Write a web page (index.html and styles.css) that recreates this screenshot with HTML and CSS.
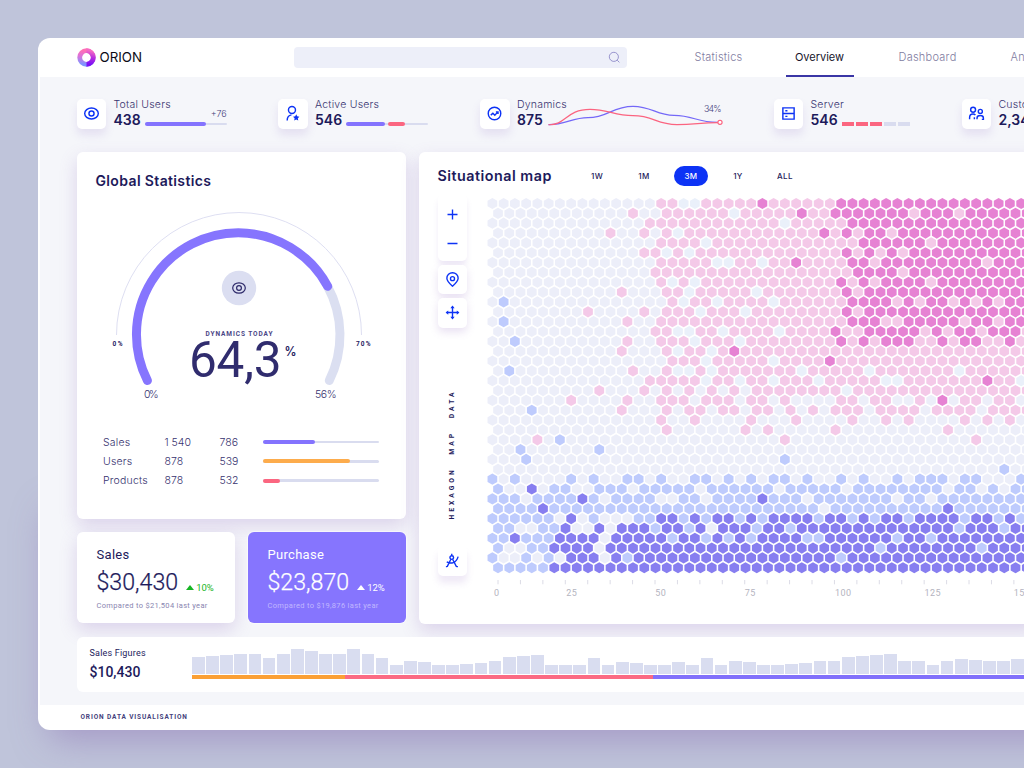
FILE: index.html
```html
<!DOCTYPE html>
<html lang="en">
<head>
<meta charset="utf-8">
<title>Orion</title>
<link rel="stylesheet" href="styles.css">
</head>
<body>
<div class="shell">
  <header class="top">
    <div class="brand">
      <svg class="logo" viewBox="0 0 19 19">
        <defs>
          <linearGradient id="lg1" x1="0.4" y1="0" x2="0.3" y2="1"><stop offset="0" stop-color="#ff6fb5"/><stop offset="0.45" stop-color="#d873dc"/><stop offset="1" stop-color="#7f95ff"/></linearGradient>
          <linearGradient id="lg2" x1="0.5" y1="0" x2="0.4" y2="1"><stop offset="0" stop-color="#f56ac4"/><stop offset="0.5" stop-color="#b52be0"/><stop offset="1" stop-color="#7a10f5"/></linearGradient>
        </defs>
        <circle cx="9.5" cy="9.5" r="6.8" fill="none" stroke="url(#lg1)" stroke-width="4.8"/>
        <path d="M9.5 2.7A6.8 6.8 0 0 1 9.500 16.300" fill="none" stroke="url(#lg2)" stroke-width="4.8"/>
      </svg>
      <span class="brand-name">ORION</span>
    </div>
    <div class="search"><svg viewBox="0 0 12 12"><circle cx="5.400" cy="5.400" r="4.200"/><path d="M8.500 8.500L10.500 10.500"/></svg></div>
    <nav class="nav">
      <a class="nav-item n1">Statistics</a>
      <a class="nav-item n2 active">Overview</a>
      <a class="nav-item n3">Dashboard</a>
      <a class="nav-item n4">Analytics</a>
    </nav>
  </header>

  <main class="main">
    <section class="stats">
      <div class="stat">
        <div class="tile"><svg viewBox="0 0 16 16"><ellipse cx="8" cy="8" rx="6.400" ry="5.100"/><circle cx="8" cy="8" r="2.400"/></svg></div>
        <div class="stat-text"><div class="label">Total Users</div>
          <div class="value-row"><b>438</b><div class="meter m82"><em>+76</em><i class="seg violet w61"></i></div></div></div>
      </div>
      <div class="stat">
        <div class="tile"><svg viewBox="0 0 16 16"><circle cx="7.500" cy="4.700" r="3.300"/><path d="M3 14.500c0-3 1.500-4.800 4-5.200"/><path class="solid" d="M11.500 8.800l.9 1.900 2.100.3-1.500 1.500.4 2.100-1.900-1-1.900 1 .4-2.100-1.500-1.500 2.100-.3z"/></svg></div>
        <div class="stat-text"><div class="label">Active Users</div>
          <div class="value-row"><b>546</b><div class="meter m82"><i class="seg violet w39"></i><i class="seg red w17"></i></div></div></div>
      </div>
      <div class="stat">
        <div class="tile"><svg viewBox="0 0 16 16"><circle cx="8" cy="8" r="5.900"/><path d="M4.500 9.500L6.500 7.800 8.300 9.600 11 6.700M9.300 6.500h2v2"/></svg></div>
        <div class="stat-text"><div class="label">Dynamics</div>
          <div class="value-row"><b>875</b></div></div>
        <svg class="spark" viewBox="547 98 178 32">
          <path class="sv" d="M548.500 124.700C565 125 572 117.700 588 117.700C608 117.700 612 106.300 633 106.300C652 106.300 656 115.300 674 115.400C694 115.500 696 122.400 718 122.400"/>
          <path class="sr" d="M548.500 124.700C566 125.500 566 109.300 590 109.300C608 109.300 614 115.700 633 115.700C654 115.700 656 124.600 677 124.600C695 124.600 700 122.600 718 122.600"/>
          <circle cx="720" cy="122.300" r="2.100"/>
          <text x="704" y="111.500" textLength="17.500">34%</text>
        </svg>
      </div>
      <div class="stat">
        <div class="tile"><svg viewBox="0 0 16 16"><path d="M2.700 2.700h10.600v10.600H2.700zM2.700 8h10.600M5 5.400h2M5 10.700h2"/></svg></div>
        <div class="stat-text"><div class="label">Server</div>
          <div class="value-row"><b>546</b><div class="blocks"><i></i><i></i><i></i><i class="off"></i><i class="off"></i></div></div></div>
      </div>
      <div class="stat">
        <div class="tile"><svg viewBox="0 0 16 16"><circle cx="4.800" cy="4.500" r="2.300"/><circle cx="11.600" cy="6" r="1.900"/><path d="M1.500 13.500V12c0-2.200 1.300-3.500 3.200-3.500 1 0 1.800.5 2.300 1M8.500 13.500v-1.200c0-1.400 1.200-2.400 3-2.400s3 1 3 2.400v1.200h-1.500M6 13.500v-2"/></svg></div>
        <div class="stat-text"><div class="label">Customers</div>
          <div class="value-row"><b>2,348</b></div></div>
      </div>
    </section>

    <section class="grid">
      <div class="left">
        <article class="card global">
          <h2 class="h-global">Global Statistics</h2>
          <svg class="gauge" viewBox="77 200 329 220">
            <path class="thin" d="M116.500 335A122.300 122.300 0 0 1 361.500 335"/>
            <path class="arc track" d="M327.700 286.700A101.800 101.800 0 0 1 329.300 380.500"/>
            <path class="arc fill" d="M147.400 380.500A101.800 101.800 0 0 1 238.300 232.800A101.800 101.800 0 0 1 327.700 286.300"/>
            <circle class="eye-bg" cx="239" cy="288" r="17.200"/>
            <ellipse class="eye" cx="239" cy="288" rx="6.300" ry="5.200"/><circle class="eye" cx="239" cy="288" r="2.400"/>
            <text class="tiny" x="112.500" y="346" textLength="10">0%</text>
            <text class="tiny" x="356" y="346" textLength="14.500">70%</text>
            <text class="tiny soft" x="205.500" y="335.600" textLength="67">DYNAMICS TODAY</text>
            <text class="big" x="189" y="376.500" textLength="92.500">64,3</text>
            <text class="pct" x="284.500" y="356" textLength="12" lengthAdjust="spacingAndGlyphs">%</text>
            <text class="end" x="144" y="398" textLength="14.500">0%</text>
            <text class="end" x="315" y="398" textLength="21.500">56%</text>
          </svg>
          <div class="rows">
            <div class="row"><span>Sales</span><span>1 540</span><span>786</span><div class="meter wide"><i class="seg violet w52"></i></div></div>
            <div class="row"><span>Users</span><span>878</span><span>539</span><div class="meter wide"><i class="seg orange w87"></i></div></div>
            <div class="row"><span>Products</span><span>878</span><span>532</span><div class="meter wide"><i class="seg red w17"></i></div></div>
          </div>
        </article>
        <div class="pair">
          <article class="card money">
            <div class="m-title">Sales</div>
            <div class="m-row"><span class="m-val">$30,430</span><span class="delta up"><i class="tri"></i>10%</span></div>
            <div class="m-note">Compared to $21,504 last year</div>
          </article>
          <article class="card money purple">
            <div class="m-title">Purchase</div>
            <div class="m-row"><span class="m-val">$23,870</span><span class="delta"><i class="tri"></i>12%</span></div>
            <div class="m-note">Compared to $19,876 last year</div>
          </article>
        </div>
      </div>

      <article class="card map">
        <div class="map-head">
          <h2 class="h-map">Situational map</h2>
          <div class="tabs"><span>1W</span><span>1M</span><span class="on">3M</span><span>1Y</span><span>ALL</span></div>
        </div>
        <div class="map-body">
          <div class="tools">
            <div class="tool zoom">
              <svg viewBox="0 0 16 16"><path d="M8 3.300v9.400M3.300 8h9.400"/></svg>
              <svg viewBox="0 0 16 16"><path d="M3.300 8h9.400"/></svg>
            </div>
            <div class="tool"><svg viewBox="0 0 16 16"><path d="M8 14.300C4.500 11.300 2.700 9.300 2.700 6.900a5.300 5.300 0 0 1 10.600 0c0 2.400-1.800 4.400-5.300 7.400z"/><circle cx="8" cy="7.200" r="1.900"/></svg></div>
            <div class="tool"><svg viewBox="0 0 16 16"><path d="M8 2.500v11M2.500 8h11"/><path class="solid" d="M8 1.500l2 2.500H6zM8 14.500l2-2.500H6zM1.500 8L4 6v4zM14.500 8L12 6v4z"/></svg></div>
            <div class="vtext">HEXAGON MAP DATA</div>
            <div class="tool last"><svg viewBox="0 0 16 16"><circle cx="7.300" cy="5.200" r="1.700"/><path d="M7.300 3.500V1.700M6.500 6.800L3 13.800M8.100 6.800l3.600 7M2.600 9.300c4 2.200 9 1.200 10.700-5M3 13.800H1.800M11.700 13.800h1.400"/></svg></div>
          </div>
          <svg class="hexmap" id="hexmap" viewBox="487 195 537 410"></svg>
        </div>
      </article>
    </section>

    <section class="card figures">
      <div class="fig-text"><div class="fig-title">Sales Figures</div><div class="fig-val">$10,430</div></div>
      <div class="fig-chart"><div class="bars" id="bars"></div>
        <div class="strip"><i class="s-orange"></i><i class="s-red"></i><i class="s-violet"></i></div></div>
    </section>
  </main>
  <footer class="foot">ORION DATA VISUALISATION</footer>
</div>
<script src="main.js"></script>
</body>
</html>
```
FILE: styles.css
```css
* { box-sizing: border-box; }
html, body { margin: 0; height: 100%; overflow: hidden; }
body { background: #bfc4da; font-family: Inter, "Liberation Sans", sans-serif; color: #1d1a5b; }
i, em { font-style: normal; }
.shell { margin: 38px 0 0 38px; width: 1100px; height: 691.500px; border-radius: 12px; background: #fff; overflow: hidden; display: flex; flex-direction: column; padding-left: 1.500px; }
body::after { content: ""; position: absolute; left: 52px; top: 500px; width: 1100px; height: 222px; border-radius: 12px; box-shadow: 0 14px 34px 4px rgba(139, 112, 180, .5); z-index: -1; }
.top { height: 38.500px; display: flex; align-items: center; flex: none; }
.brand { width: 254px; padding-left: 37px; display: flex; align-items: center; gap: 4px; }
.logo { width: 19px; height: 19px; }
.brand-name { font-size: 13.300px; color: #0b0b16; font-weight: 400; }
.search { width: 333px; height: 21px; border-radius: 4px; background: #edeff9; display: flex; align-items: center; justify-content: flex-end; padding-right: 6px; }
.search svg { width: 13px; height: 13px; fill: none; stroke: #9490cc; stroke-width: .9; }
.nav { display: flex; height: 100%; margin-left: 56px; }
.nav-item { display: flex; align-items: center; justify-content: center; font-size: 11px; letter-spacing: .25px; font-weight: 300; color: #7f7c9f; flex: none; white-space: nowrap; }
.n1 { width: 72px; } .n2 { width: 68px; margin-left: 31px; } .n3 { width: 80px; margin-left: 34px; } .n4 { margin-left: 43px; }
.n2.active { color: #16152b; font-weight: 400; letter-spacing: 0; border-bottom: 2px solid #3a35a5; padding-top: 2px; }
.main { flex: 1; background: #f5f6fa; padding: 22.500px 0 0 37px; min-height: 0; }
.stats { display: grid; grid-template-columns: 201.500px 202px 293.500px 188px 180px; height: 52.500px; }
.stat { display: flex; position: relative; gap: 7.500px; }
.tile { width: 29.500px; height: 29.500px; border-radius: 5px; background: #fff; box-shadow: 0 6px 9px rgba(140, 110, 200, .16); display: grid; place-items: center; flex: none; }
.tile svg, .tool svg { width: 17px; height: 17px; fill: none; stroke: #0d33f5; stroke-width: 1.350; }
.tile .solid, .tool .solid { fill: #0d33f5; stroke: none; }
.label { font-size: 10.500px; line-height: 12px; letter-spacing: .22px; font-weight: 300; color: #37336f; white-space: nowrap; }
.value-row { display: flex; align-items: flex-start; }
.value-row b { font-size: 14px; line-height: 18px; font-weight: 600; margin-right: 4px; }
.meter { position: relative; height: 2.300px; border-radius: 2px; background: #d9dcef; display: flex; align-items: center; gap: 3px; }
.value-row .meter { margin-top: 11.500px; }
.m82 { width: 82px; }
.meter em { position: absolute; right: 0; top: -14.500px; font-size: 9px; font-weight: 300; color: #45417c; }
.seg { height: 4px; border-radius: 2px; flex: none; }
.violet { background: #8473fe; } .red { background: #fb6680; } .orange { background: #fdac4c; }
.w61 { width: 61.500px; } .w39 { width: 39px; } .w17 { width: 17px; } .w52 { width: 52px; } .w87 { width: 86.500px; }
.spark { position: absolute; left: 66.500px; top: -1px; width: 178px; height: 32px; }
.spark path { fill: none; stroke-width: 1.200; }
.sv { stroke: #7468f8; } .sr { stroke: #fb6480; }
.spark circle { fill: #fff; stroke: #fb5c7a; stroke-width: 1.100; }
.spark text { font-size: 8.800px; font-weight: 300; fill: #45417c; }
.blocks { display: flex; gap: 2px; margin-top: 11px; }
.blocks i { width: 12px; height: 4.300px; background: #fb6680; }
.blocks .off { background: #d9dcef; }
.grid { display: grid; grid-template-columns: 329.500px 620px; gap: 12.500px; height: 472px; }
.card { background: #fff; border-radius: 6px; box-shadow: 0 7px 18px rgba(139, 100, 190, .24); }
.left { display: flex; flex-direction: column; gap: 13px; }
.global { height: 367px; padding-top: 19px; }
h2 { margin: 0; font-weight: 600; font-size: 14px; line-height: 20px; letter-spacing: .36px; white-space: nowrap; }
.h-global { padding-left: 19px; }
.gauge { display: block; width: 329px; height: 220px; margin-top: 9px; }
.thin { fill: none; stroke: #dedff2; stroke-width: 1; }
.arc { fill: none; stroke-width: 9; stroke-linecap: round; }
.track { stroke: #dbdff1; } .fill { stroke: #8675fe; }
.eye-bg { fill: #dbdef1; } .eye { fill: none; stroke: #2c2869; stroke-width: 1.200; }
.tiny { font: bold 6.500px Roboto, sans-serif; fill: #25215f; }
.soft { fill: #4a4686; }
.big { font: 400 49.500px Roboto, sans-serif; fill: #302c6e; }
.pct { font: 600 13px Inter, sans-serif; fill: #25215f; }
.end { font: 300 10.500px Inter, sans-serif; fill: #37336f; }
.rows { padding: 13px 0 0 26.500px; }
.row { display: grid; grid-template-columns: 61.500px 55px 43.500px 116px; align-items: center; height: 19.250px; font-size: 10.500px; font-weight: 300; letter-spacing: .2px; color: #37336f; white-space: nowrap; }
.row span + span { letter-spacing: 0; }
.wide { width: 116px; }
.pair { display: grid; grid-template-columns: 158.500px 158.500px; gap: 12.500px; height: 91.500px; }
.money { padding: 14px 0 0 20px; font-family: Roboto, sans-serif; white-space: nowrap; }
.m-title { font-size: 13px; line-height: 18px; letter-spacing: .3px; }
.m-row { display: flex; align-items: flex-end; gap: 8px; height: 34px; }
.m-val { font-size: 23.200px; line-height: 32px; font-weight: 300; -webkit-text-stroke: .25px currentColor; }
.delta { display: flex; align-items: center; gap: 2px; font-size: 9.500px; line-height: 13px; }
.m-row .delta { padding-bottom: 4px; }
.tri { border: 4px solid transparent; border-top: 0; border-bottom: 5px solid currentColor; }
.up { color: #16b524; }
.m-note { font-size: 7.500px; line-height: 10px; letter-spacing: .32px; color: #8985b0; margin-top: 3px; }
.purple { background: #8675fe; color: #fff; box-shadow: 0 0 0 1px rgba(255, 255, 255, .5); }
.purple .m-note { color: #c0b7ff; }
.map { padding: 14px 0 0 19px; }
.map-head { display: flex; height: 29px; align-items: flex-start; }
.h-map { width: 135px; font-size: 14.300px; letter-spacing: .5px; }
.tabs { display: flex; align-items: center; font-size: 8px; font-weight: 500; letter-spacing: .4px; }
.tabs span { width: 34px; height: 20px; border-radius: 10px; display: grid; place-items: center; margin-left: 13px; }
.tabs span:first-child { margin-left: 7.500px; }
.tabs .on { background: #0d33f5; color: #fff; }
.map-body { display: grid; grid-template-columns: 49.500px 537px; }
.tools { display: flex; flex-direction: column; width: 29.500px; height: 381px; gap: 4px; }
.tool { height: 29.500px; border-radius: 5px; background: #fff; display: grid; place-items: center; box-shadow: 0 4px 9px rgba(139, 100, 190, .2); flex: none; }
.tool svg { stroke-width: 1.300; }
.zoom { height: 66px; grid-template-rows: 29px 29px; padding-top: 5px; box-shadow: 0 5px 6px -1px rgba(139, 100, 190, .16); }
.vtext { flex: 1; writing-mode: vertical-rl; transform: rotate(180deg); align-self: center; font: bold 6.800px Roboto, sans-serif; letter-spacing: 2.950px; word-spacing: 8px; color: #1d1a5b; padding-top: 23px; white-space: nowrap; }
.last { box-shadow: 0 7px 7px rgba(139, 100, 190, .14); }
.hexmap { width: 537px; height: 410px; }
.hex-p { fill: #f4c9e8; } .hex-m { fill: #e682d3; } .hex-b { fill: #becbfd; } .hex-v { fill: #877ef0; } .hex-e { fill: #eceef9; } .hex-o { fill: #eaf0fa; }
.tick { stroke: #dcdce6; stroke-width: 1; }
.axis { font: 9px Roboto, sans-serif; fill: #b4b4c0; text-anchor: middle; letter-spacing: .4px; }
.figures { margin-top: 13px; height: 55.500px; width: 970px; display: flex; padding-left: 13px; box-shadow: none; position: relative; }
.fig-text { width: 102.500px; padding-top: 10px; font-family: Roboto, sans-serif; white-space: nowrap; }
.fig-title { font-size: 9px; line-height: 12px; letter-spacing: .2px; }
.fig-val { font-size: 14px; line-height: 18px; margin-top: 4px; font-weight: 500; }
.fig-chart { padding-top: 12px; width: 833px; }
.bars { height: 25px; display: flex; align-items: flex-end; gap: 1.330px; }
.bars i { width: 12.800px; background: #d9ddf0; flex: none; }
.strip { display: flex; height: 4px; margin-top: 1px; }
.s-orange { width: 153px; background: #fba035; } .s-red { width: 308px; background: #fb6a83; } .s-violet { flex: 1; background: #8170fb; }
.foot { height: 25px; flex: none; padding-left: 41px; display: flex; align-items: center; font: bold 6.500px Roboto, sans-serif; letter-spacing: .88px; color: #45417c; }
```
FILE: main.js
```js
// Each row lists painted columns in order: colour key, then columns or ranges.
const rows = [
  'p15-30 o17,18 m24,31-47', 'p12,15-47 o21 m27,30-47 p37,41', 'p14-31 o26 m32-47',
  'p10,13,15-47 o16 m29,31-47 p32,35', 'p15-32 o19 m33-47 p39', 'p13-47 o15,17 m31-47 p32,34,36',
  'p15-47 o20,21,24 m27,32-47 p34,44', 'p14-31 m32-47 p36', 'p15-47 o16,18 m31-47 p32,34,39',
  'p11,15-47 o17,23 m31-47 p32', 'b1 p16-47 o17,20,25 m32-47 p36,38,41,43,45',
  'p8,13,15-47 o18,22 m31-47 p32', 'b1 p12,15-31 m32-47 p35,36,42,45',
  'p14-47 o16,17,20,25 m30,33-46 p38,40,43', 'b2 p12,15-47 o18,22 m31,33,35-37,40,42,43,46',
  'p11,15-47 o16,19 m21', 'p16-47 o19,25 m30', 'b1 p12,15-47 o16,17,19,27,33,41',
  'p14-47 o19,22,25,29,35,36,47 m44', 'p9,13,15,17,19,21,23-47 o31',
  'p7,12,15-17,19-21,23,24,26,31,32,34,35,38,42,43,45,46 m40',
  'b3 p11,15,17,18,20,21,23,24,26,28,30-32,34-37,39-42,44-47',
  'p15,18,23,27,32,35,37,42,44,46', 'p15,22,24,30,40', 'p4,26,43 b6', 'b2,9', 'b3,26', 'b45',
  'b0,2,7,9,12,13,15,18,19,21,23,25,26,28,31,33,36,38-40,42,43,47',
  'b0,5,6,9-47 v3 e12,18,25,31,40,43,45', 'b0-47 v8,24 e3,10,15,16,19,28,36,39',
  'b0-47 v4,40 e29', 'b0-47 e6,8,10-12 v7,15,16,18,20,21,23,25-28,30,31,33,35,36,38-41,43,44,46',
  'v6-47 b0,1,4,5,14,17,23,26,41,45 e2,3,7,8,10,19', 'v2,6-47 b0,1,3-5,16,19,21,23,28,29,36,39 e10',
  'v5-47 b0,3,4,34,43 e9', 'v7-47 b0,3,5,12,31 e10', 'b0-4 v5-47'
];
const NS = 'http://www.w3.org/2000/svg';
const map = document.getElementById('hexmap');
function add(tag, attrs, text) {
  const el = document.createElementNS(NS, tag);
  for (const k in attrs) el.setAttribute(k, attrs[k]);
  if (text) el.textContent = text;
  map.appendChild(el);
}
rows.forEach((spec, r) => {
  const cells = Array(48).fill('e');
  spec.split(' ').forEach(part => part.slice(1).split(',').forEach(range => {
    const [a, b] = range.split('-').map(Number);
    for (let c = a; c <= (b === undefined ? a : b); c++) cells[c] = part[0];
  }));
  cells.forEach((key, c) => {
    const x = 492.4 + c * 11.25 + (r % 2) * 5.62, y = 203.5 + r * 9.845;
    add('path', { class: 'hex-' + key, d: `M${x} ${y - 5.6}l4.85 2.8v5.6l-4.85 2.8l-4.85 -2.8v-5.6z` });
  });
});
for (let x = 498; x < 1024; x += 22.43) add('path', { class: 'tick', d: `M${x} 580v4.300` });
[[0, 496.7], [25, 571.7], [50, 660.7], [75, 750.2], [100, 843.2], [125, 932.7], [150, 1022]]
  .forEach(([t, x]) => add('text', { class: 'axis', x, y: 596 }, String(t)));

const tops = [98,94,92,87,87,99,87,73,78,87,87,73,87,99,120,110,111,120,120,117,114,110,98,94,92,120,120,120,99,120,111,114,120,120,111,120,99,120,110,111,120,120,117,114,110,110,98,94,92,87,110,110,122,110,104,106,110,110,104];
document.getElementById('bars').innerHTML = tops.map(t => `<i style="height:${((147 - t) / 3).toFixed(1)}px"></i>`).join('');
```
